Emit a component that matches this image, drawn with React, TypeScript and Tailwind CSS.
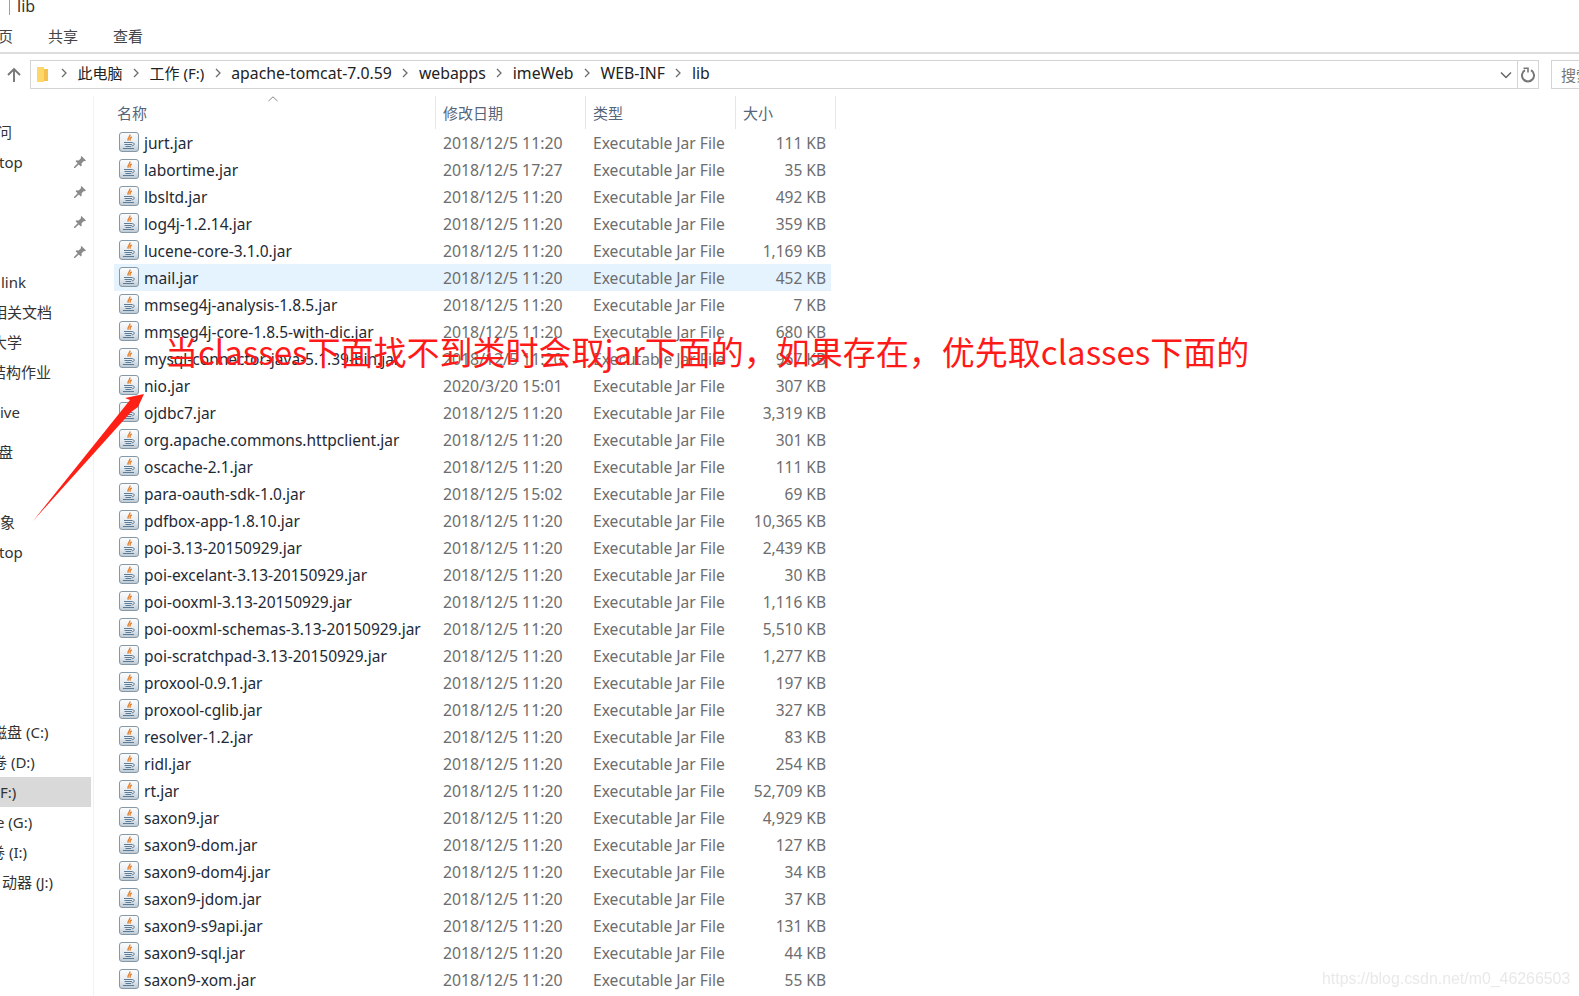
const files: [string, string, string][] = [
  ["jurt.jar", "2018/12/5 11:20", "111 KB"],
  ["labortime.jar", "2018/12/5 17:27", "35 KB"],
  ["lbsltd.jar", "2018/12/5 11:20", "492 KB"],
  ["log4j-1.2.14.jar", "2018/12/5 11:20", "359 KB"],
  ["lucene-core-3.1.0.jar", "2018/12/5 11:20", "1,169 KB"],
  ["mail.jar", "2018/12/5 11:20", "452 KB"],
  ["mmseg4j-analysis-1.8.5.jar", "2018/12/5 11:20", "7 KB"],
  ["mmseg4j-core-1.8.5-with-dic.jar", "2018/12/5 11:20", "680 KB"],
  ["mysql-connector-java-5.1.39-bin.jar", "2018/12/5 11:20", "967 KB"],
  ["nio.jar", "2020/3/20 15:01", "307 KB"],
  ["ojdbc7.jar", "2018/12/5 11:20", "3,319 KB"],
  ["org.apache.commons.httpclient.jar", "2018/12/5 11:20", "301 KB"],
  ["oscache-2.1.jar", "2018/12/5 11:20", "111 KB"],
  ["para-oauth-sdk-1.0.jar", "2018/12/5 15:02", "69 KB"],
  ["pdfbox-app-1.8.10.jar", "2018/12/5 11:20", "10,365 KB"],
  ["poi-3.13-20150929.jar", "2018/12/5 11:20", "2,439 KB"],
  ["poi-excelant-3.13-20150929.jar", "2018/12/5 11:20", "30 KB"],
  ["poi-ooxml-3.13-20150929.jar", "2018/12/5 11:20", "1,116 KB"],
  ["poi-ooxml-schemas-3.13-20150929.jar", "2018/12/5 11:20", "5,510 KB"],
  ["poi-scratchpad-3.13-20150929.jar", "2018/12/5 11:20", "1,277 KB"],
  ["proxool-0.9.1.jar", "2018/12/5 11:20", "197 KB"],
  ["proxool-cglib.jar", "2018/12/5 11:20", "327 KB"],
  ["resolver-1.2.jar", "2018/12/5 11:20", "83 KB"],
  ["ridl.jar", "2018/12/5 11:20", "254 KB"],
  ["rt.jar", "2018/12/5 11:20", "52,709 KB"],
  ["saxon9.jar", "2018/12/5 11:20", "4,929 KB"],
  ["saxon9-dom.jar", "2018/12/5 11:20", "127 KB"],
  ["saxon9-dom4j.jar", "2018/12/5 11:20", "34 KB"],
  ["saxon9-jdom.jar", "2018/12/5 11:20", "37 KB"],
  ["saxon9-s9api.jar", "2018/12/5 11:20", "131 KB"],
  ["saxon9-sql.jar", "2018/12/5 11:20", "44 KB"],
  ["saxon9-xom.jar", "2018/12/5 11:20", "55 KB"],
];

const crumbs = ["此电脑", "工作 (F:)", "apache-tomcat-7.0.59", "webapps", "imeWeb", "WEB-INF", "lib"];

function JarIcon() {
  return (
    <svg width="20" height="20" viewBox="0 0 20 20" className="mb-[2px] shrink-0">
      <defs>
        <linearGradient id="jarbg" x1="0" y1="0" x2="0" y2="1">
          <stop offset="0" stopColor="#fbfcfd" />
          <stop offset="0.6" stopColor="#e6ebef" />
          <stop offset="1" stopColor="#bcc8d2" />
        </linearGradient>
      </defs>
      <rect x="0.5" y="0.5" width="19" height="19" rx="2.5" fill="url(#jarbg)" stroke="#8498a8" />
      <path d="M10.8 2.5c1.2 2.2-3 3.2-1.6 6.2M12.8 5c-2.2 1-2 2.4-1.4 3.6" fill="none" stroke="#e07f2e" strokeWidth="1.4" />
      <path d="M5 10.5h8.5M5.5 12.5h7.5M6.5 14.5h5.5M4 16.5h11" fill="none" stroke="#5b7c99" strokeWidth="1.1" />
      <path d="M13.5 10.8c2.6 0 2.4 2.8-.8 3.2" fill="none" stroke="#5b7c99" strokeWidth="1" />
    </svg>
  );
}

function Pin() {
  return (
    <svg width="14" height="14" viewBox="0 0 14 14">
      <path d="M8.5 1 13 5.5l-1 .8-1-.4-2.4 2.4.1 2.2-.9.9-2-2L2 13l-1 0 0-1 3.6-3.8-2-2 .9-.9 2.2.1L8.1 3l-.4-1z" fill="#8a8a8a" />
    </svg>
  );
}

function Chevron() {
  return (
    <svg width="8" height="10" viewBox="0 0 8 10" className="shrink-0">
      <path d="M2 1l4 4-4 4" fill="none" stroke="#6d6d6d" strokeWidth="1.3" />
    </svg>
  );
}

function NavRow({ text, shift, pin, active }: { text: string; shift?: string; pin?: boolean; active?: boolean }) {
  return (
    <div className={"flex h-[30px] items-center justify-between overflow-hidden whitespace-nowrap pr-[4px] " + (active ? "bg-[#d9d9d9]" : "")}>
      <span className={shift ?? ""}>{text}</span>
      {pin && <Pin />}
    </div>
  );
}

export default function App() {
  return (
    <div className="relative h-[996px] w-[1579px] overflow-hidden bg-white text-[15px] leading-[20px] text-[#1e2a36] [font-family:'Noto_Sans','Noto_Sans_CJK_SC',sans-serif]">
      {/* title */}
      <div className="flex h-[15px] items-end gap-[7px] overflow-hidden pl-[9px]">
        <div className="h-[15px] w-px bg-[#a0a0a0]" />
        <span className="mb-[-1px] text-[16px] text-[#333]">lib</span>
      </div>
      {/* ribbon tabs */}
      <div className="flex h-[39px] items-center border-b-2 border-[#dcdcdc] pt-[4px] text-[#444]">
        <span className="ml-[-2px]">页</span>
        <span className="ml-[35px]">共享</span>
        <span className="ml-[35px]">查看</span>
      </div>
      {/* address row */}
      <div className="mt-[6px] flex h-[29px] items-center">
        <svg width="16" height="16" viewBox="0 0 16 16" className="ml-[6px] mr-[8px] shrink-0">
          <path d="M8 15V2M2 8l6-6 6 6" fill="none" stroke="#777" strokeWidth="1.9" />
        </svg>
        <div className="flex h-[29px] w-[1509px] items-center border border-[#d4d4d4] pl-[5px]">
          <svg width="13" height="18" viewBox="0 0 13 18" className="shrink-0">
            <path d="M1 1h7v15H1z" fill="#ffd768" />
            <path d="M8 3h4v12H8z" fill="#f4c04e" />
          </svg>
          <div className="ml-[11px] flex items-center gap-[9.5px] whitespace-nowrap pb-[3px] text-[#222]">
            {crumbs.map((c, i) => (
              <div key={c} className="flex items-center gap-[9.5px]">
                {i === 0 && <Chevron />}
                <span className={i < 2 ? "text-[15px]" : "text-[15.8px]"}>{c}</span>
                {i < crumbs.length - 1 && <Chevron />}
              </div>
            ))}
          </div>
          <div className="ml-auto flex h-full items-center">
            <svg width="12" height="8" viewBox="0 0 12 8" className="mr-[5px]">
              <path d="M1 1.5l5 5 5-5" fill="none" stroke="#666" strokeWidth="1.5" />
            </svg>
            <div className="flex h-full w-[21px] items-center justify-center border-l border-[#d4d4d4]">
              <svg width="16" height="16" viewBox="0 0 16 16">
                <path d="M5 3.2a6 6 0 1 0 6 0" fill="none" stroke="#777" strokeWidth="2" />
                <path d="M3.5 1.2h4.5v4.2" fill="none" stroke="#777" strokeWidth="1.6" />
              </svg>
            </div>
          </div>
        </div>
        <div className="ml-[12px] flex h-[29px] flex-1 items-center overflow-hidden border border-r-0 border-[#d4d4d4] pl-[9px] whitespace-nowrap text-[#777]">
          搜索
        </div>
      </div>
      {/* body */}
      <div className="mt-[7px] flex">
        {/* sidebar */}
        <div className="h-[900px] w-[94px] shrink-0 border-r border-[#f2f2f2] pr-[2px] text-[#333]">
          <div className="h-[21px]" />
          <NavRow text="问" shift="ml-[-3px]" />
          <NavRow text="top" shift="ml-[-1px]" pin />
          <NavRow text="" pin />
          <NavRow text="" pin />
          <NavRow text="" pin />
          <NavRow text="link" shift="ml-[1px]" />
          <NavRow text="相关文档" shift="ml-[-8px]" />
          <NavRow text="大学" shift="ml-[-8px]" />
          <NavRow text="结构作业" shift="ml-[-9px]" />
          <div className="h-[10px]" />
          <NavRow text="ive" />
          <div className="h-[10px]" />
          <NavRow text="盘" shift="ml-[-2px]" />
          <div className="h-[40px]" />
          <NavRow text="象" />
          <NavRow text="top" shift="ml-[-1px]" />
          <div className="h-[150px]" />
          <NavRow text="磁盘 (C:)" shift="ml-[-8px]" />
          <NavRow text="卷 (D:)" shift="ml-[-8px]" />
          <NavRow text="F:)" active />
          <NavRow text="e (G:)" shift="ml-[-4px]" />
          <NavRow text="卷 (I:)" shift="ml-[-10px]" />
          <NavRow text="动器 (J:)" shift="ml-[2px]" />
        </div>
        {/* list */}
        <div className="ml-[20px] flex-1">
          <div className="relative flex h-[33px] items-center text-[#56657a]">
            <div className="flex h-full w-[322px] items-center border-r border-[#e5e5e5] pl-[3px]">名称</div>
            <div className="flex h-full w-[150px] items-center border-r border-[#e5e5e5] pl-[7px]">修改日期</div>
            <div className="flex h-full w-[150px] items-center border-r border-[#e5e5e5] pl-[7px]">类型</div>
            <div className="flex h-full w-[100px] items-center border-r border-[#e5e5e5] pl-[7px]">大小</div>
            <svg width="10" height="6" viewBox="0 0 10 6" className="absolute left-[154px] top-0">
              <path d="M0.5 5L5 0.8 9.5 5" fill="none" stroke="#888" strokeWidth="1" />
            </svg>
          </div>
          <div>
            {files.map(([name, date, size]) => (
              <div key={name} className={"flex h-[27px] w-[717px] items-center whitespace-nowrap " + (name === "mail.jar" ? "bg-[#e5f3ff]" : "")}>
                <div className="flex w-[321px] items-center gap-[5px] pl-[5px]">
                  <JarIcon />
                  <span className="text-[15.5px] text-[#1e2a36]">{name}</span>
                </div>
                <div className="w-[150px] pl-[8px] text-[15.8px] text-[#6d6d6d]">{date}</div>
                <div className="w-[134px] pl-[8px] text-[15.6px] text-[#6d6d6d]">Executable Jar File</div>
                <div className="flex-1 pr-[5px] text-right text-[15.5px] text-[#6d6d6d]">{size}</div>
              </div>
            ))}
          </div>
        </div>
      </div>
      {/* annotation overlay */}
      <div className="absolute left-[165px] top-[328px] whitespace-nowrap text-[33px] leading-[46px] text-[#ff1a1a] [font-family:'Noto_Sans_CJK_SC','Noto_Sans',sans-serif]">
        当classes下面找不到类时会取jar下面的，如果存在，优先取classes下面的
      </div>
      <svg width="120" height="140" viewBox="0 0 120 140" className="absolute left-[30px] top-[390px]">
        <path d="M114 4 L95 8 L100 10 L3 131 L101 22 L108 17 Z" fill="#ff2015" />
      </svg>
      <div className="absolute left-[1322px] top-[969px] whitespace-nowrap text-[15.9px] leading-[20px] text-[#e9e9e9] blur-[0.4px] [font-family:'Liberation_Sans',sans-serif]">
        https://blog.csdn.net/m0_46266503
      </div>
    </div>
  );
}
